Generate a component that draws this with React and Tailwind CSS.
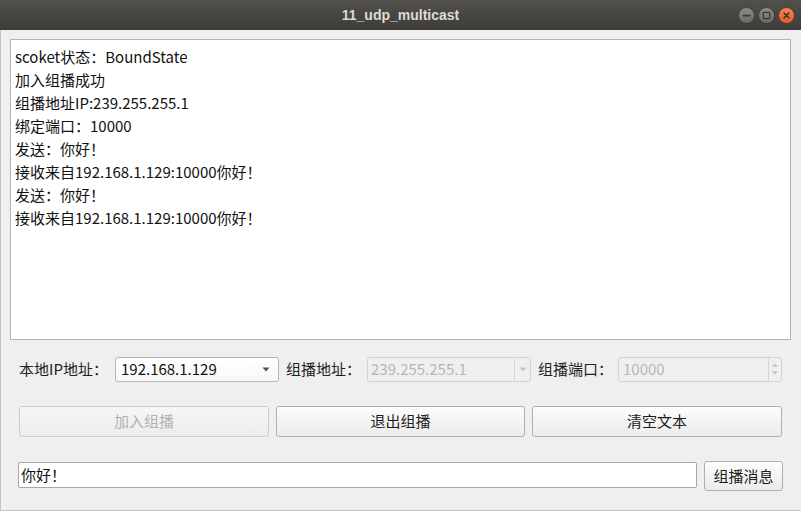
const FONT = { fontFamily: '"Noto Sans CJK SC", "Noto Sans", sans-serif' };

const LOG = [
  "scoket状态：BoundState",
  "加入组播成功",
  "组播地址IP:239.255.255.1",
  "绑定端口：10000",
  "发送：你好！",
  "接收来自192.168.1.129:10000你好！",
  "发送：你好！",
  "接收来自192.168.1.129:10000你好！",
];

function WinButton({ kind }) {
  const close = kind === "close";
  return (
    <svg width="17" height="17" viewBox="0 0 17 17">
      <defs>
        <linearGradient id={`g-${kind}`} x1="0" y1="0" x2="0" y2="1">
          <stop offset="0" stopColor={close ? "#f5845a" : "#8e8d89"} />
          <stop offset="1" stopColor={close ? "#e55a2b" : "#6a6965"} />
        </linearGradient>
      </defs>
      <circle cx="8.5" cy="8.5" r="8" fill={`url(#g-${kind})`} stroke="#34332f" strokeWidth="0.8" />
      {kind === "min" && <rect x="4.5" y="7.8" width="8" height="1.6" rx="0.5" fill="#3a3935" />}
      {kind === "max" && <rect x="5.3" y="5.3" width="6.4" height="6.4" rx="0.6" fill="none" stroke="#3a3935" strokeWidth="1.3" />}
      {close && <path d="M6 6 L11 11 M11 6 L6 11" stroke="#4a2a1e" strokeWidth="1.5" strokeLinecap="round" />}
    </svg>
  );
}

function Caret({ color }) {
  return (
    <svg width="8" height="5" viewBox="0 0 8 5">
      <path d="M0.5 0.5 L7.5 0.5 L4 4.5 Z" fill={color} />
    </svg>
  );
}

function PushButton({ children, disabled, className = "" }) {
  return (
    <div
      className={`flex items-center justify-center rounded-[3px] border text-[15px] ${
        disabled
          ? "border-[#cdcdcd] bg-gradient-to-b from-[#f6f6f6] to-[#ececec] text-[#b2b2b2]"
          : "border-[#b0b0b0] bg-gradient-to-b from-[#fdfdfd] to-[#ebebeb] text-[#1c1c1c]"
      } ${className}`}
    >
      {children}
    </div>
  );
}

export default function App() {
  return (
    <div className="w-[801px] h-[511px] flex flex-col overflow-hidden bg-[#efefef]" style={FONT}>
      {/* Title bar */}
      <div className="relative h-[30px] shrink-0 flex items-center justify-center bg-gradient-to-b from-[#51504c] to-[#3d3c38]">
        <span
          className="text-[14px] font-bold text-[#dfdbd2]"
          style={{ fontFamily: '"Liberation Sans", Arial, sans-serif' }}
        >
          11_udp_multicast
        </span>
        <div className="absolute right-[6px] top-[7px] flex gap-[3px]">
          <WinButton kind="min" />
          <WinButton kind="max" />
          <WinButton kind="close" />
        </div>
      </div>

      {/* Body */}
      <div className="flex-1 flex flex-col pt-[9px] border-l border-b border-[#c4c4c4]">
        {/* Log text area */}
        <div className="ml-[9px] mr-[10px] h-[301px] bg-white border border-[#b4b4b4] px-[4px] pt-[5px] text-[15px] leading-[23px] text-[#111]">
          {LOG.map((line, i) => (
            <div key={i}>{line}</div>
          ))}
        </div>

        {/* Address row */}
        <div className="mt-[16px] h-[26px] pl-[18px] flex items-center text-[15px] text-[#222]">
          <span className="w-[96px]">本地IP地址：</span>
          <div className="w-[164px] h-[25px] flex items-center justify-between rounded-[3px] border border-[#b6b6b6] bg-gradient-to-b from-[#ffffff] to-[#f7f7f7] pl-[5px] pr-[8px] text-[#111]">
            <span>192.168.1.129</span>
            <Caret color="#555" />
          </div>
          <span className="ml-[7px] w-[81px]">组播地址：</span>
          <div className="w-[164px] h-[25px] flex items-center rounded-[3px] border border-[#d2d2d2] bg-[#efefef] text-[#b6b6b6]">
            <span className="flex-1 pl-[3px]">239.255.255.1</span>
            <div className="w-[16px] h-full flex items-center justify-center border-l border-[#d8d8d8]">
              <Caret color="#c4c4c4" />
            </div>
          </div>
          <span className="ml-[7px] w-[80px]">组播端口：</span>
          <div className="w-[164px] h-[25px] flex items-center rounded-[3px] border border-[#d2d2d2] bg-[#efefef] text-[#b6b6b6]">
            <span className="flex-1 pl-[4px]">10000</span>
            <div className="w-[13px] h-full flex flex-col items-center justify-center gap-[4px] border-l border-[#d8d8d8]">
              <svg width="6" height="4" viewBox="0 0 6 4"><path d="M0 4 L3 0 L6 4 Z" fill="#cbcbcb" /></svg>
              <svg width="6" height="4" viewBox="0 0 6 4"><path d="M0 0 L3 4 L6 0 Z" fill="#cbcbcb" /></svg>
            </div>
          </div>
        </div>

        {/* Buttons row */}
        <div className="mt-[24px] h-[31px] pl-[18px] flex gap-[7px]">
          <PushButton disabled className="w-[250px]">加入组播</PushButton>
          <PushButton className="w-[249px]">退出组播</PushButton>
          <PushButton className="w-[250px]">清空文本</PushButton>
        </div>

        {/* Message row */}
        <div className="mt-[24px] pl-[17px] flex items-start">
          <div className="mt-[1px] w-[679px] h-[26px] flex items-center rounded-[2px] border border-[#a8a8a8] bg-white pl-[2px] text-[15px] text-[#111]">
            你好！
          </div>
          <PushButton className="ml-[7px] w-[79px] h-[30px]">组播消息</PushButton>
        </div>
      </div>
    </div>
  );
}
